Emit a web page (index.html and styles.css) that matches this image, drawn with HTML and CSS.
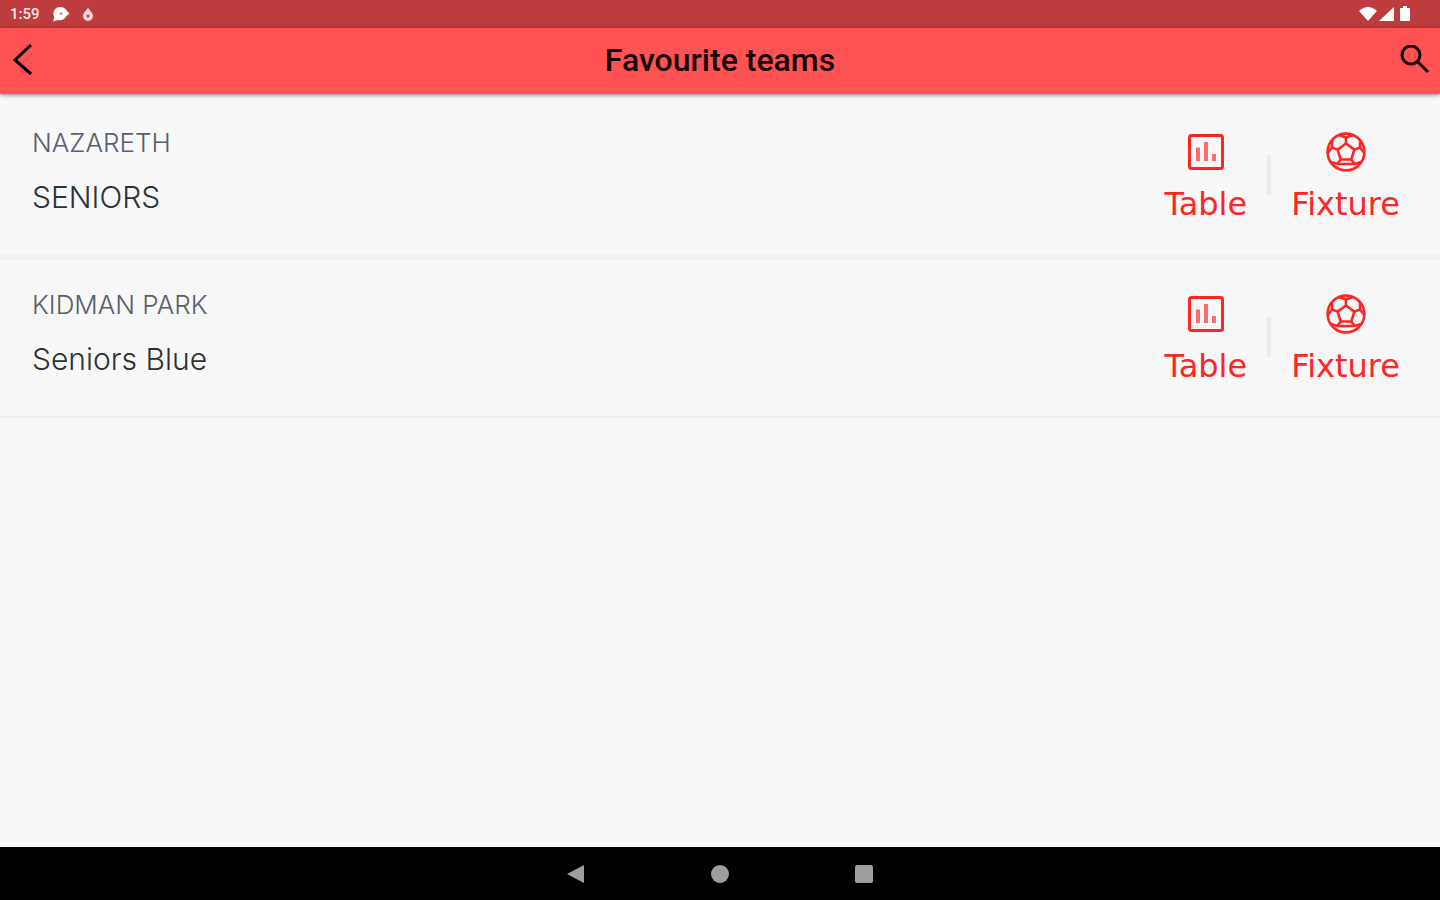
FILE: index.html
```html
<!DOCTYPE html>
<html lang="en">
<head>
  <meta charset="UTF-8" />
  <meta name="viewport" content="width=device-width, initial-scale=1.0"/>
  <title>Favourite teams</title>
  <link rel="stylesheet" href="styles.css">
</head>
<body>
  <svg class="sprite" aria-hidden="true">
    <symbol id="icon-table" viewBox="0 0 40 40">
      <rect x="3.5" y="3.5" width="33" height="33" rx="2" fill="none" stroke="currentColor" stroke-width="3"/>
      <path d="M12 15.5v13.5M20 10v19M28 22v7" stroke="currentColor" stroke-width="4" opacity="0.65"/>
    </symbol>
    <symbol id="icon-ball" viewBox="0 0 40 40">
      <g fill="none" stroke="currentColor" stroke-width="2.6" stroke-linejoin="round">
        <circle cx="20" cy="20" r="18.4"/>
        <path d="M20 11.5l8.4 6.1-3.2 9.9H14.8l-3.2-9.9z"/>
        <path d="M20 11.5v-6M28.4 17.6l5.6-2.1M25.2 27.5l3.6 4.5M14.8 27.5L11.2 32M11.6 17.6L6 15.5"/>
        <path d="M13 3l7 2.5L27 3M34.1 8.2v7.3l4.3 5.8M35.6 29.8L28.8 32M11.2 32l-6.8-2.2M1.6 21.3L6 15.5V8.2M11.2 32h17.6"/>
      </g>
    </symbol>
  </svg>

  <div class="status-bar">
    <div class="status-group">
      <span class="clock">1:59</span>
      <svg width="18" height="16" viewBox="0 0 18 16">
        <path d="M8.5 1a7 6.5 0 0 1 6 3.5L17.5 7.5 14.5 10a7 6.5 0 0 1-8.5 4L1 15.5l1.3-4.5A6.7 6.7 0 0 1 8.5 1z" fill="#fff"/>
        <circle cx="9" cy="7.5" r="1.5" fill="#c99"/>
      </svg>
      <svg width="12" height="16" viewBox="0 0 12 16">
        <path d="M6 1c.5 3 5 5 5 9a5 5 0 0 1-10 0c0-4 4.5-6 5-9z" fill="#f6d5d5"/>
        <circle cx="6" cy="10" r="1.5" fill="#bf3c3e"/>
      </svg>
    </div>
    <div class="status-group status-right">
      <svg width="18" height="16" viewBox="0 0 18 16"><path d="M0 5q9-8 18 0L9 15z" fill="#fff"/></svg>
      <svg width="15" height="16" viewBox="0 0 15 16"><path d="M15 1v14H0z" fill="#fff"/></svg>
      <svg width="10" height="16" viewBox="0 0 10 16"><path d="M3 0h4v2h3v13H0V2h3z" fill="#fff"/></svg>
    </div>
  </div>

  <header class="app-bar">
    <button class="icon-button" aria-label="Back">
      <svg width="24" height="34" viewBox="0 0 24 34"><path d="M21 2L5 17l16 14" fill="none" stroke="#000" stroke-width="3"/></svg>
    </button>
    <h1>Favourite teams</h1>
    <button class="icon-button" aria-label="Search">
      <svg width="30" height="30" viewBox="0 0 30 30"><g fill="none" stroke="#1a0505" stroke-width="3"><circle cx="11" cy="10" r="9"/><path d="M17.5 16.5L28 27"/></g></svg>
    </button>
  </header>

  <main class="teams">
    <section class="team">
      <div class="team-info">
        <h2>NAZARETH</h2>
        <p>SENIORS</p>
      </div>
      <div class="team-actions">
        <button><svg class="icon"><use href="#icon-table"/></svg>Table</button>
        <span class="separator"></span>
        <button><svg class="icon"><use href="#icon-ball"/></svg>Fixture</button>
      </div>
    </section>
    <section class="team">
      <div class="team-info">
        <h2>KIDMAN PARK</h2>
        <p>Seniors Blue</p>
      </div>
      <div class="team-actions">
        <button><svg class="icon"><use href="#icon-table"/></svg>Table</button>
        <span class="separator"></span>
        <button><svg class="icon"><use href="#icon-ball"/></svg>Fixture</button>
      </div>
    </section>
  </main>

  <nav class="nav-bar">
    <button aria-label="Back"><svg width="20" height="20" viewBox="0 0 20 20"><path d="M1 10L18 1v18z"/></svg></button>
    <button aria-label="Home"><svg width="20" height="20" viewBox="0 0 20 20"><circle cx="10" cy="10" r="9"/></svg></button>
    <button aria-label="Recent apps"><svg width="20" height="20" viewBox="0 0 20 20"><rect x="1" y="1" width="18" height="18" rx="2"/></svg></button>
  </nav>
</body>
</html>
```

FILE: styles.css
```css
* { box-sizing: border-box; }
body {
  margin: 0;
  min-height: 100vh;
  display: flex;
  flex-direction: column;
  font-family: Inter, sans-serif;
  background: #f8f8f8;
}
h1, h2, p { margin: 0; }
button {
  padding: 0;
  border: none;
  background: none;
  font: inherit;
  color: inherit;
  cursor: pointer;
}
svg { display: block; }
.sprite { display: none; }
.status-bar {
  display: flex;
  justify-content: space-between;
  align-items: center;
  height: 28px;
  padding: 0 30px 0 10px;
  background: #bf3c3e;
  color: #fbe4e4;
}
.status-group {
  display: flex;
  align-items: center;
  gap: 12px;
}
.status-right { gap: 2px; }
.status-right svg:last-child { margin-left: 4px; }
.clock {
  font-family: Roboto, sans-serif;
  font-size: 15px;
  font-weight: 500;
}
.app-bar {
  display: flex;
  justify-content: space-between;
  align-items: center;
  height: 66px;
  padding: 0 10px 2px;
  background: #ff5252;
  box-shadow: 0 1px 4px rgba(0,0,0,0.5);
}
.app-bar h1 {
  font-family: Roboto, sans-serif;
  font-size: 32px;
  line-height: 40px;
  font-weight: 500;
  color: #140404;
}
.icon-button {
  display: flex;
  align-items: center;
  width: 30px;
  height: 40px;
}
.teams {
  flex: 1;
  padding-top: 4px;
}
.team {
  display: flex;
  justify-content: space-between;
  padding: 28px 40px 30px 32px;
  border-bottom: 6px solid #f2f2f2;
}
.team:last-child { border-bottom: 2px solid #ededed; }
.team-info {
  display: flex;
  flex-direction: column;
  gap: 18px;
}
.team h2 {
  font-size: 26px;
  line-height: 34px;
  font-weight: 300;
  color: #56606c;
}
.team p {
  font-size: 30px;
  line-height: 38px;
  font-weight: 300;
  color: #2b3238;
}
.team-actions {
  display: flex;
  align-items: center;
  gap: 20px;
  color: #ff2525;
}
.team-actions button {
  display: flex;
  flex-direction: column;
  align-items: center;
  gap: 12px;
  padding-top: 6px;
  font-family: "DejaVu Sans", sans-serif;
  font-size: 32px;
  line-height: 40px;
}
.icon {
  width: 40px;
  height: 40px;
}
.separator {
  width: 4px;
  height: 40px;
  background: #ebebeb;
}
.nav-bar {
  display: flex;
  justify-content: center;
  align-items: center;
  gap: 124px;
  height: 53px;
  background: #000;
}
.nav-bar svg { fill: #9e9e9e; }
```
